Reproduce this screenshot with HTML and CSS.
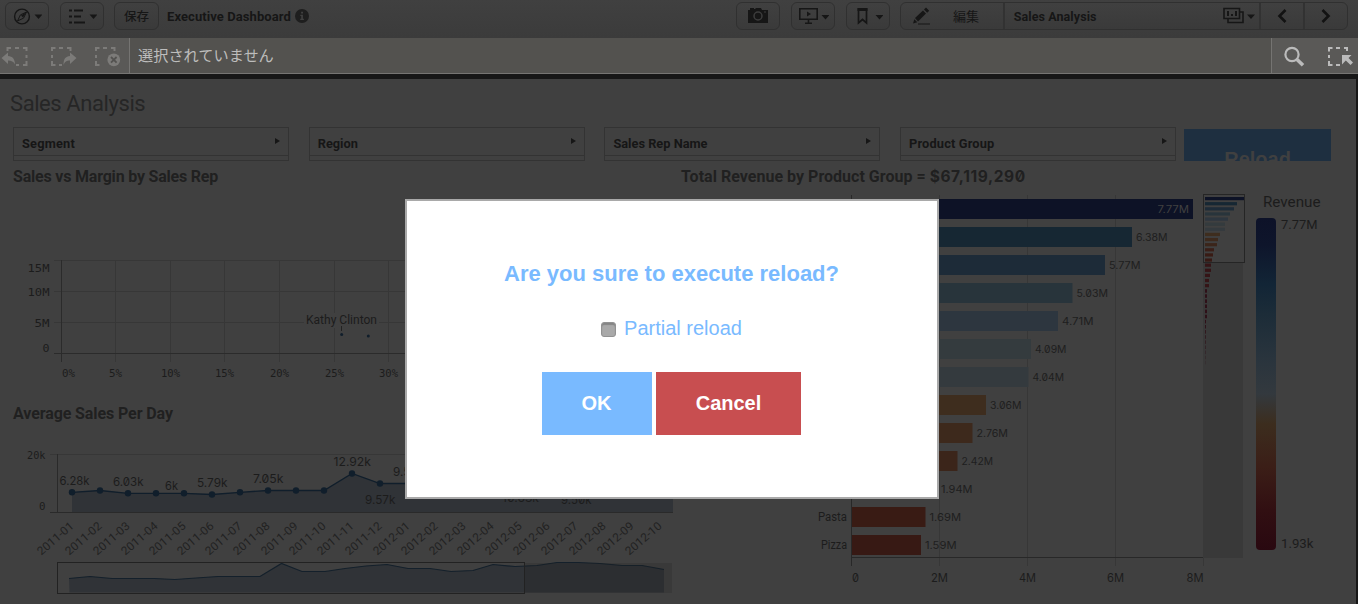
FILE: index.html
```html
<!DOCTYPE html>
<html lang="ja">
<head>
<meta charset="utf-8">
<title>Executive Dashboard</title>
<link rel="stylesheet" href="styles.css">
</head>
<body>
<header class="toolbar">
  <button class="btn btn-compass"><svg width="30" height="20" viewBox="0 0 30 20"><circle cx="10" cy="10.500" r="7.400" fill="none" stroke="#161616" stroke-width="1.400"/><path d="M14.500 6 11.600 12.100 5.500 15 8.400 8.900z" fill="none" stroke="#161616" stroke-width="1"/><path d="M14.500 6 11 11.500 9 9.500z" fill="#161616"/><path d="M22.500 8.500h8l-4 4.500z" fill="#161616"/></svg></button>
  <button class="btn btn-list"><svg width="30" height="20" viewBox="0 0 30 20" fill="#161616"><path d="M2 3.500h3v2H2zM7 3.500h9v2H7zM2 9.500h3v2H2zM7 9.500h7v2H7zM2 15.500h3v2H2zM7 15.500h11v2H7zM22.500 8.500h8l-4 4.500z"/></svg></button>
  <button class="btn btn-save"><span>保存</span></button>
  <span class="app-name">Executive Dashboard</span>
  <svg class="info" width="14" height="14" viewBox="0 0 14 14"><circle cx="7" cy="7" r="7" fill="#1e1e1e"/><path d="M5.300 5.800h2.600v4h1v1.300H5.200V9.800h1V7.100h-.900zM6.100 2.700h1.900v1.800H6.100z" fill="#404040"/></svg>
  <div class="tools">
    <button class="btn"><svg width="22" height="18" viewBox="0 0 22 18"><path d="M1 3h2V1h4v1h1l1-1h5l1 2h6v13H1z" fill="#161616"/><circle cx="11" cy="9" r="4" fill="none" stroke="#3d3d3d" stroke-width="1.500"/><path d="M17 5h2" stroke="#3d3d3d"/></svg></button>
    <button class="btn"><svg width="32" height="20" viewBox="0 0 32 20"><path d="M2.800 2.800h17.400v10.400H2.800zM11.500 13v4M8 17.300h7" fill="none" stroke="#161616" stroke-width="1.600"/><path d="M10 5.500l4 2.500-4 2.500zM24.500 9h8l-4 4.500z" fill="#161616"/></svg></button>
    <button class="btn"><svg width="30" height="20" viewBox="0 0 30 20"><path d="M5.500 3h8v14l-4-3.500L5.500 17z" fill="none" stroke="#161616" stroke-width="1.700"/><path d="M4.500 2h10v3h-10zM22.500 9h8l-4 4.500z" fill="#161616"/></svg></button>
    <div class="group">
      <div class="edit"><svg width="20" height="20" viewBox="0 0 20 20" fill="#161616"><path d="M4 12 12 4.500l3 3L7 15.500zM13 3.500l2-2L18.200 4.700l-2 2zM3.300 13.200l3 3L2 17.500zM7 17.500h12v1H7z"/></svg><span>編集</span></div>
      <div class="sheet"><b>Sales Analysis</b><svg width="32" height="18" viewBox="0 0 32 18"><path d="M1 1.500h15.500v10H1zM5 12v3.500h15V5h-3.500" fill="none" stroke="#161616" stroke-width="1.600"/><path d="M4 4h2v5H4zM8 7h2v2H8zM12 4h2v5h-2zM24 7.500h8l-4 4.500z" fill="#161616"/></svg></div>
      <div class="arrow"><svg width="12" height="14" viewBox="0 0 12 14"><path d="M9.500 1 3.500 7l6 6" fill="none" stroke="#121212" stroke-width="2.600"/></svg></div>
      <div class="arrow"><svg width="12" height="14" viewBox="0 0 12 14"><path d="M2.500 1l6 6-6 6" fill="none" stroke="#121212" stroke-width="2.600"/></svg></div>
    </div>
  </div>
</header>

<section class="selections">
  <div class="history">
    <svg width="129" height="36" viewBox="0 38 129 36">
      <g fill="none" stroke="#7c7b79" stroke-width="2">
        <path d="M7.500 51V48H11M15 48h4M23 48h3.500v3M26.500 55v3M26.500 61v4H23M19 65h-3"/>
        <path d="M52 51v-3h3.500M59 48h4M67 48h3.500v3M52 55v3M52 61v4h3.500M59 65h3"/>
        <path d="M96 51v-3h3.500M103 48h4M111 48h3.500v3M96 55v3M96 61v4h3.500"/>
      </g>
      <path d="M1.500 58 8 52.500v3.500c4.500.3 7 3 7 8.500-1.500-3-3.500-4-7-4v3.500zM76.500 58 70 52.500v3.500c-4.500.3-6.500 3-6.500 9 1.500-3.500 3-4.500 6.500-4.500v3.500z" fill="#7c7b79"/>
      <circle cx="113.800" cy="59.800" r="6.400" fill="#7c7b79"/><path d="M111 57l5.600 5.600M116.600 57 111 62.600" stroke="#535250" stroke-width="1.800"/>
    </svg>
  </div>
  <div class="message">選択されていません</div>
  <div class="search">
    <svg width="86" height="36" viewBox="1272 38 86 36"><circle cx="1292" cy="54.500" r="6.600" fill="none" stroke="#bbb" stroke-width="2.200"/><path d="M1297 59.500l6 5.800" stroke="#bbb" stroke-width="3.600"/><path d="M1329 51.500V48h3.500M1336 48h4M1344 48h3v3M1329 55v3M1329 61v4h3.500M1336 65h4" fill="none" stroke="#bbb" stroke-width="2"/><path d="M1342 55h9.500l-3 3 4.500 4.500-2.500 2.500-4.700-4.600-3.800 4z" fill="#bbb"/></svg>
  </div>
</section>

<main class="sheet-area">
  <h1>Sales Analysis</h1>
  <div class="filters">
    <div class="filter"><span>Segment</span><i></i></div>
    <div class="filter"><span>Region</span><i></i></div>
    <div class="filter"><span>Sales Rep Name</span><i></i></div>
    <div class="filter"><span>Product Group</span><i></i></div>
    <div class="reload">Reload</div>
  </div>
  <div class="columns">
    <div class="left">
      <h2>Sales vs Margin by Sales Rep</h2>
      <svg id="scatter" class="chart" width="661" height="212" viewBox="13 190 661 212"></svg>
      <h2>Average Sales Per Day</h2>
      <svg id="trend" class="chart" width="661" height="177" viewBox="13 427 661 177"></svg>
    </div>
    <div class="right">
      <h2>Total Revenue by Product Group = <span class="total">$67,119,290</span></h2>
      <svg id="revenue" class="chart" width="675" height="414" viewBox="681 190 675 414">
        <defs><linearGradient id="scale" x1="0" y1="0" x2="0" y2="1">
          <stop offset="0" stop-color="#0d1228"/><stop offset=".08" stop-color="#0e152b"/><stop offset=".2" stop-color="#122536"/><stop offset=".29" stop-color="#1c2c38"/><stop offset=".42" stop-color="#29343d"/><stop offset=".53" stop-color="#33393e"/><stop offset=".62" stop-color="#3c2d1e"/><stop offset=".75" stop-color="#3b1e17"/><stop offset=".88" stop-color="#310f12"/><stop offset="1" stop-color="#290810"/>
        </linearGradient></defs>
      </svg>
    </div>
  </div>
</main>

<div class="dialog">
  <div class="question">Are you sure to execute reload?</div>
  <label class="partial"><span class="check"></span>Partial reload</label>
  <div class="actions"><button class="ok">OK</button><button class="cancel">Cancel</button></div>
</div>
<script src="charts.js"></script>
</body>
</html>
```
FILE: styles.css
```css
* { box-sizing: border-box; }
body { margin: 0; width: 1358px; height: 604px; overflow: hidden; position: relative; background: #171717; font-family: Roboto, "Noto Sans CJK JP", sans-serif; color: #161616; }
svg { display: block; flex: none; }
button { font: inherit; color: inherit; margin: 0; padding: 0; border: 0; }
.toolbar { height: 38px; padding: 2px 10px 0 5px; display: flex; align-items: flex-start; background: linear-gradient(#404040, #3b3b3b); }
.btn { width: 44px; height: 28px; border: 1px solid #303030; border-radius: 6px; background: linear-gradient(#404040, #3a3a3a); display: flex; align-items: center; justify-content: center; }
.btn-list { margin-left: 11px; }
.btn-save { margin-left: 10px; width: 45px; font-size: 12.500px; font-weight: 500; padding-bottom: 2px; }
.app-name { margin-left: 8px; width: 124px; line-height: 29px; font-size: 13px; font-weight: 700; white-space: nowrap; letter-spacing: .08px; }
.info { margin: 7px 0 0 4px; }
.tools { margin-left: auto; display: flex; }
.tools > .btn { margin-right: 11px; }
.tools > .btn:nth-child(3) { margin-right: 10px; }
.group { display: flex; width: 448px; height: 28px; border: 1px solid #303030; border-radius: 6px; background: linear-gradient(#404040, #3a3a3a); align-items: stretch; }
.group > div { display: flex; align-items: center; }
.group > div + div { border-left: 2px solid #323232; }
.edit { width: 102px; padding-left: 10px; gap: 22px; font-size: 13px; }
.edit span { padding-bottom: 2px; }
.sheet { width: 257px; padding: 0 4px 0 9px; justify-content: space-between; font-size: 12.500px; letter-spacing: .08px; }
.arrow { width: 44px; justify-content: center; }
.selections { height: 36px; display: flex; background: #53524f; border-bottom: 1px solid #767573; }
.history { width: 130px; background: #5a5957; border-right: 1px solid #757472; }
.message { flex: 1; padding-left: 8px; color: #bdbdbc; font: 15.200px/32px "Noto Sans CJK JP", sans-serif; }
.search { width: 87px; background: #5a5957; border-left: 1px solid #757472; }
.sheet-area { margin-top: 5px; width: 1356px; height: 525px; background: #404040; overflow: hidden; }
h1 { margin: 0; height: 48px; padding-left: 10px; font-size: 22px; line-height: 49px; font-weight: 400; letter-spacing: -.42px; color: #262626; }
.filters { height: 34px; padding-left: 13px; display: flex; gap: 19.700px; }
.filter { width: 276px; height: 34px; border: 1px solid #333; display: flex; flex-direction: row; justify-content: space-between; padding: 0 8px; background: linear-gradient(#333, #333) 0 27px / 100% 1px no-repeat; font-size: 12.800px; line-height: 32px; font-weight: 700; white-space: nowrap; }
.filter:first-child { letter-spacing: .2px; }
.filter:nth-child(4) { letter-spacing: .15px; }
.filter i { width: 0; height: 0; margin-top: 10px; border-left: 5px solid #161616; border-top: 3.500px solid transparent; border-bottom: 3.500px solid transparent; }
.reload { width: 147px; height: 32px; margin: 2px 0 0 -11.700px; padding-top: 18px; overflow: hidden; background: #1e2f40; color: #404040; text-align: center; font: 700 20px/24px "Liberation Sans", Arial, sans-serif; }
.columns { display: flex; padding-left: 13px; }
.left { width: 668px; }
.right { width: 675px; }
h2 { margin: 0; height: 29px; font-size: 16px; line-height: 31px; font-weight: 700; letter-spacing: -.2px; color: #202020; white-space: nowrap; }
.left h2 + .chart + h2 { height: 25px; line-height: 23px; letter-spacing: -.1px; }
.right h2 { letter-spacing: .02px; }
.total { font-family: Inter, sans-serif; font-feature-settings: "zero"; font-size: 15.500px; letter-spacing: .6px; }
.chart text { font-family: Roboto, sans-serif; fill: #1c1c1c; }
.chart .num { font-family: "DejaVu Sans Mono", monospace; }
.chart .val { font-family: Inter, sans-serif; font-feature-settings: "zero"; }
.dialog { position: absolute; left: 405px; top: 199px; width: 534px; height: 300px; padding-right: 2px; background: #fff; border: 2px solid #a9a9a9; display: flex; flex-direction: column; align-items: center; font-family: "Liberation Sans", Arial, sans-serif; color: #79baff; }
.question { margin-top: 60px; padding-left: 1px; font-size: 22px; line-height: 26px; font-weight: 700; white-space: nowrap; }
.partial { margin-top: 29px; padding-left: 1px; height: 24px; display: flex; align-items: center; font-size: 20px; line-height: 24px; }
.check { width: 15px; height: 15px; margin: 3px 8px 0 0; border-radius: 3px; border: 1px solid #929292; background: #a9a9a9; box-shadow: inset 0 2px 1px #858585; }
.actions { margin-top: 32px; display: flex; gap: 4px; }
.actions button { height: 63px; color: #fff; font-size: 20px; font-weight: 700; }
.ok { width: 110px; background: #79baff; }
.actions .cancel { width: 145px; padding-left: 1px; background: #c84e50; }
```
FILE: charts.js
```js
function add(svg, tag, attrs, content) {
  const el = document.createElementNS('http://www.w3.org/2000/svg', tag);
  for (const key in attrs) el.setAttribute(key, attrs[key]);
  if (content !== undefined) el.textContent = content;
  svg.appendChild(el);
  return el;
}
function line(svg, d, stroke, width) {
  add(svg, 'path', { d: d, fill: 'none', stroke: stroke, 'stroke-width': width || 1 });
}
function label(svg, x, y, size, text, width, anchor, extra) {
  add(svg, 'text', Object.assign({ x: x, y: y, 'font-size': size, textLength: width, lengthAdjust: 'spacingAndGlyphs', 'text-anchor': anchor || 'start' }, extra || {}), text);
}

/* Scatter plot */
const scatter = document.getElementById('scatter');
[260.500, 291.500, 322.500].forEach(y => line(scatter, `M54 ${y}H674`, '#373737'));
[115.500, 170.500, 224.500, 279.500, 334.500, 388.500].forEach(x => line(scatter, `M${x} 260V362`, '#373737'));
line(scatter, 'M54 353.500H674M61.500 260V362', '#2b2b2b');
[['15M', 272, 22], ['10M', 296, 22], ['5M', 327, 15], ['0', 352, 7]].forEach(t => label(scatter, 49.500, t[1], 11, t[0], t[2], 'end', { class: 'num' }));
[['0%', 68.500, 13], ['5%', 115.500, 13], ['10%', 170.500, 19], ['15%', 224.500, 19], ['20%', 279.500, 19], ['25%', 334.500, 19], ['30%', 388.500, 19]].forEach(t => label(scatter, t[1], 377, 11, t[0], t[2], 'middle', { class: 'num' }));
add(scatter, 'rect', { x: 304, y: 313, width: 75, height: 15, fill: '#404040' });
label(scatter, 306, 324, 12, 'Kathy Clinton', 71);
line(scatter, 'M341.500 326V331', '#222');
add(scatter, 'circle', { cx: 341.700, cy: 334.500, r: 1.500, fill: '#101e2b' });
add(scatter, 'circle', { cx: 368.300, cy: 336, r: 1.500, fill: '#101e2b' });

/* Daily sales trend */
const trend = document.getElementById('trend');
const values = [492.300, 490.500, 493.300, 493.300, 493.300, 494.500, 492.300, 490.500, 490.500, 490.500, 473.500, 483.500, 483.500, 480, 477, 475, 480, 480, 484, 482, 474, 476];
const points = values.map((y, i) => `${72 + 28 * i} ${y}`).join('L');
line(trend, 'M50 454.500H673', '#373737');
add(trend, 'path', { d: `M72 512V${values[0]}L${points}L673 490V512Z`, fill: '#303337' });
line(trend, `M${points}`, '#101e2b', 1.300);
values.forEach((y, i) => add(trend, 'circle', { cx: 72 + 28 * i, cy: y, r: 3.200, fill: '#101e2b' }));
line(trend, 'M57.500 454V512M50 512.500H673', '#2a2a2a');
label(trend, 45.500, 459, 11, '20k', 18.500, 'end', { class: 'num' });
label(trend, 45.500, 510, 11, '0', 6.500, 'end', { class: 'num' });
[['6.28k', 59.500, 485, 30], ['6.03k', 113, 486, 30.500], ['6k', 165, 490, 13], ['5.79k', 197, 487, 30.500], ['7.05k', 253, 483, 30.500], ['12.92k', 333.500, 466, 37.500], ['9.57k', 365, 504, 30.500], ['9.57k', 393, 476, 30.500], ['10.63k', 502, 501.500, 37], ['9.50k', 561, 504, 30.500]].forEach(t => label(trend, t[1], t[2], 11.500, t[0], t[3], 'start', { class: 'val' }));
for (let i = 0; i < 22; i++) {
  const month = i < 12 ? `2011-${String(i + 1).padStart(2, '0')}` : `2012-${String(i - 11).padStart(2, '0')}`;
  const x = 74.500 + 28 * i;
  label(trend, x, 527, 11.500, month, 44, 'end', { transform: `rotate(-41 ${x} 527)`, style: 'fill:#222' });
}
const overview = '69 578.500L90 576.500L112 578.500L154 578.500L175 579.500L196 578L218 576.500L260 576.500L281.500 563.500L302 571.500L325 571.500L345 568.500L366 566L387 564.500L408 568.500L430 568.500L451 571.500L473 570.500L493 564.500L515 566.500L537 565.500L557 562.500L578 562.500L600 563.500L622 565.500L642 565.500L664 569.500';
add(trend, 'path', { d: `M${overview}V592.500H69.500Z`, fill: '#303337' });
line(trend, `M${overview}`, '#14202b', 1.200);
add(trend, 'rect', { x: 525, y: 563, width: 147, height: 30, fill: '#202020', opacity: .22 });
add(trend, 'rect', { x: 57.500, y: 562.500, width: 467, height: 31, fill: 'none', stroke: '#222' });

/* Revenue bars */
const revenue = document.getElementById('revenue');
[939.500, 1027.500, 1115.500, 1203.500].forEach(x => line(revenue, `M${x} 195V566`, '#373737'));
const bars = [['7.77M', 1193, '#0d1226'], ['6.38M', 1132, '#162733'], ['5.77M', 1105, '#1d2b38'], ['5.03M', 1072.500, '#28343b'], ['4.71M', 1058, '#2d363f'], ['4.09M', 1031, '#343b3e'], ['4.04M', 1028.500, '#343a3e'], ['3.06M', 986, '#3e2d1e'], ['2.76M', 972.500, '#3d291c'], ['2.42M', 957.500, '#3b251a'], ['1.94M', 937, '#3a1e17'], ['1.69M', 925.500, '#391b14'], ['1.59M', 921, '#371914']];
bars.forEach((b, i) => {
  const y = 199 + 28 * i;
  add(revenue, 'rect', { x: 852, y: y, width: b[1] - 852, height: 20, fill: b[2] });
  label(revenue, i ? b[1] + 4 : 1189, y + 14, 10.500, b[0], 31.500, i ? 'start' : 'end', { class: 'val', style: i ? 'fill:#1e1e1e' : 'fill:#404040' });
});
line(revenue, 'M851.500 195V566M851 557.500H1204', '#282828');
label(revenue, 847, 521, 12, 'Pasta', 29, 'end');
label(revenue, 847, 549, 12, 'Pizza', 26, 'end');
[['0', 855.500, 7], ['2M', 939.500, 17], ['4M', 1027.500, 17], ['6M', 1115.500, 17], ['8M', 1195, 17]].forEach(t => label(revenue, t[1], 582, 11.500, t[0], t[2], 'middle', { class: 'val' }));

/* Scroll overview */
add(revenue, 'rect', { x: 1203, y: 263, width: 40, height: 295, fill: '#393939' });
const widths = [39, 32, 29, 25, 23, 20, 20, 15, 13, 12, 9, 8, 7, 6, 6, 5, 4, 4];
widths.forEach((w, i) => add(revenue, 'rect', { x: 1205, y: 197 + 5.120 * i, width: w, height: 3.200, fill: bars[i] ? bars[i][2] : '#351416' }));
for (let i = 18; i < 33; i++) add(revenue, 'rect', { x: 1205, y: 197 + 5.120 * i, width: i < 24 ? 2 : 1, height: 3.500, fill: '#2e1018', opacity: i < 25 ? 1 : (34 - i) / 10 });
add(revenue, 'rect', { x: 1203.500, y: 194.500, width: 41, height: 68, fill: 'none', stroke: '#252525' });

/* Colour legend */
label(revenue, 1263, 207, 15, 'Revenue', 57.500);
add(revenue, 'rect', { x: 1256, y: 218, width: 20, height: 332, rx: 4, fill: 'url(#scale)' });
label(revenue, 1281, 229, 13, '7.77M', 36.500);
label(revenue, 1281, 548, 13, '1.93k', 32.500);
```
